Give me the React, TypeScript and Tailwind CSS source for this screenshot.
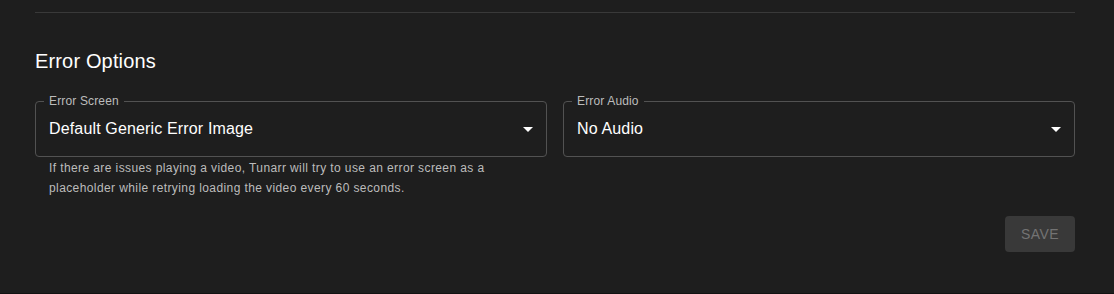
import React from "react";

function ArrowDrop() {
  return (
    <svg viewBox="0 0 24 24" className="w-6 h-6 fill-white shrink-0">
      <path d="M7 10l5 5 5-5z" />
    </svg>
  );
}

function SelectField({ label, value }: { label: string; value: string }) {
  return (
    <div className="relative h-14 rounded border border-[#525252] flex items-center pl-[13px] pr-[6px]">
      {/* notched label */}
      <span className="absolute left-[8px] top-[-7px] px-[5px] bg-[#1e1e1e] text-xs leading-3 tracking-[0.15px] text-[#bcbcbc]">
        {label}
      </span>
      <span className="flex-1 text-base tracking-[0.15px] text-white">{value}</span>
      <ArrowDrop />
    </div>
  );
}

export default function App() {
  return (
    <div className="h-[294px] w-full bg-[#1e1e1e] border-b border-[#121212] font-['Liberation_Sans',Arial,sans-serif]">
      <div className="pl-[35px] w-[1075px]">
        <div className="pt-3">
          <div className="h-px bg-[#393939]" />
        </div>

        <h6 className="mt-8 text-xl leading-8 tracking-[0.15px] text-white">Error Options</h6>

        <div className="mt-6 grid grid-cols-2 gap-4">
          <div>
            <SelectField label="Error Screen" value="Default Generic Error Image" />
            <p className="mt-[1px] px-[14px] text-xs leading-5 tracking-[0.4px] text-[#bcbcbc]">
              If there are issues playing a video, Tunarr will try to use an error screen as a placeholder while
              retrying loading the video every 60 seconds.
            </p>
          </div>
          <div>
            <SelectField label="Error Audio" value="No Audio" />
          </div>
        </div>

        <div className="mt-[18px] flex justify-end">
          <button
            disabled
            className="px-4 py-1.5 rounded bg-[#393939] text-[#737373] text-sm font-medium leading-6 tracking-[0.4px] uppercase"
          >
            Save
          </button>
        </div>
      </div>
    </div>
  );
}
